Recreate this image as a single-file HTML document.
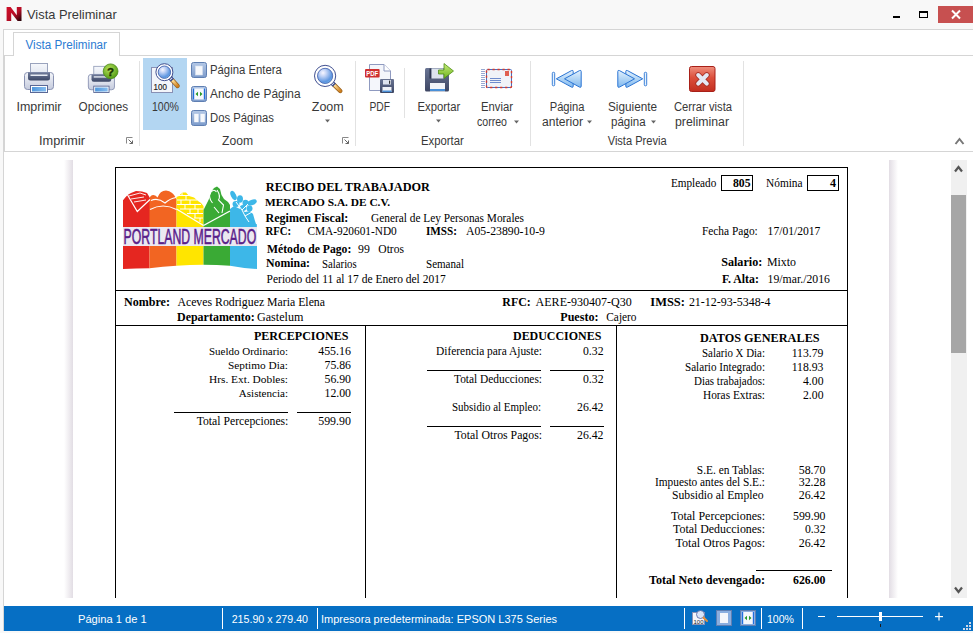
<!DOCTYPE html>
<html><head><meta charset="utf-8"><title>Vista Preliminar</title>
<style>html,body{margin:0;padding:0;width:973px;height:633px;overflow:hidden;background:#f8f8f8}</style>
</head><body>
<svg width="973" height="633" viewBox="0 0 973 633" style="display:block"><rect x="0" y="0" width="973" height="633" fill="#f8f8f8"/>
<defs><linearGradient id="nlg" x1="0" y1="0" x2="1" y2="1"><stop offset="0" stop-color="#d0102a"/><stop offset="0.55" stop-color="#b50d25"/><stop offset="1" stop-color="#1a0005"/></linearGradient></defs>
<path d="M6.6 21 L6.6 7 L10.6 7 L16.8 15.2 L16.8 7 L21.5 7 L21.5 21 L17.6 21 L11.2 12.8 L11.2 21 Z" fill="url(#nlg)"/>
<text x="27" y="18.5" font-family="Liberation Sans" font-size="12.7" fill="#383838" textLength="89.80" lengthAdjust="spacingAndGlyphs">Vista Preliminar</text>
<rect x="893" y="16" width="7" height="2" fill="#000"/>
<rect x="919.5" y="11.5" width="8" height="6" fill="none" stroke="#000" stroke-width="1"/>
<rect x="919" y="11" width="9" height="2" fill="#000"/>
<rect x="938" y="6" width="35" height="17" fill="#c75050"/>
<path d="M952 10.5 L960 18.5 M960 10.5 L952 18.5" stroke="#fff" stroke-width="2"/>
<rect x="3" y="29" width="970" height="1" fill="#d5d5d5"/>
<rect x="4" y="30" width="969" height="122" fill="#ffffff"/>
<rect x="3" y="29" width="1" height="602" fill="#d5d5d5"/>
<rect x="13" y="32" width="107" height="1" fill="#d5d5d5"/>
<rect x="13" y="32" width="1" height="24" fill="#d5d5d5"/>
<rect x="119" y="32" width="1" height="24" fill="#d5d5d5"/>
<rect x="4" y="55" width="9" height="1" fill="#d5d5d5"/>
<rect x="120" y="55" width="853" height="1" fill="#d5d5d5"/>
<text x="25.5" y="48.6" font-family="Liberation Sans" font-size="12" fill="#2b7bd3" textLength="81.50" lengthAdjust="spacingAndGlyphs">Vista Preliminar</text>
<rect x="4" y="151" width="969" height="1" fill="#d5d5d5"/>
<rect x="4" y="56" width="1" height="95" fill="#d5d5d5"/>
<rect x="139" y="61" width="1" height="85" fill="#e2e2e2"/>
<rect x="355" y="61" width="1" height="85" fill="#e2e2e2"/>
<rect x="530" y="61" width="1" height="85" fill="#e2e2e2"/>
<rect x="743" y="61" width="1" height="85" fill="#e2e2e2"/>
<rect x="404" y="68" width="1" height="50" fill="#e2e2e2"/>
<rect x="143" y="58" width="44" height="72" fill="#b3d6f2"/>
<text x="16.5" y="111" font-family="Liberation Sans" font-size="12" fill="#383838" textLength="45.00" lengthAdjust="spacingAndGlyphs">Imprimir</text>
<text x="78.6" y="111" font-family="Liberation Sans" font-size="12" fill="#383838" textLength="49.40" lengthAdjust="spacingAndGlyphs">Opciones</text>
<text x="152" y="111" font-family="Liberation Sans" font-size="12" fill="#383838" textLength="27.00" lengthAdjust="spacingAndGlyphs">100%</text>
<text x="210" y="74" font-family="Liberation Sans" font-size="12" fill="#383838" textLength="71.80" lengthAdjust="spacingAndGlyphs">Página Entera</text>
<text x="210" y="98" font-family="Liberation Sans" font-size="12" fill="#383838" textLength="90.50" lengthAdjust="spacingAndGlyphs">Ancho de Página</text>
<text x="210" y="122" font-family="Liberation Sans" font-size="12" fill="#383838" textLength="64.00" lengthAdjust="spacingAndGlyphs">Dos Páginas</text>
<text x="311.8" y="111" font-family="Liberation Sans" font-size="12" fill="#383838" textLength="31.90" lengthAdjust="spacingAndGlyphs">Zoom</text>
<text x="369.5" y="111" font-family="Liberation Sans" font-size="12" fill="#383838" textLength="20.50" lengthAdjust="spacingAndGlyphs">PDF</text>
<text x="417.5" y="111" font-family="Liberation Sans" font-size="12" fill="#383838" textLength="42.70" lengthAdjust="spacingAndGlyphs">Exportar</text>
<text x="481" y="111" font-family="Liberation Sans" font-size="12" fill="#383838" textLength="32.00" lengthAdjust="spacingAndGlyphs">Enviar</text>
<text x="477" y="126" font-family="Liberation Sans" font-size="12" fill="#383838" textLength="30.00" lengthAdjust="spacingAndGlyphs">correo</text>
<text x="549.7" y="111" font-family="Liberation Sans" font-size="12" fill="#383838" textLength="34.80" lengthAdjust="spacingAndGlyphs">Página</text>
<text x="542" y="126" font-family="Liberation Sans" font-size="12" fill="#383838" textLength="41.00" lengthAdjust="spacingAndGlyphs">anterior</text>
<text x="608" y="111" font-family="Liberation Sans" font-size="12" fill="#383838" textLength="49.00" lengthAdjust="spacingAndGlyphs">Siguiente</text>
<text x="611" y="126" font-family="Liberation Sans" font-size="12" fill="#383838" textLength="34.60" lengthAdjust="spacingAndGlyphs">página</text>
<text x="674" y="111" font-family="Liberation Sans" font-size="12" fill="#383838" textLength="58.00" lengthAdjust="spacingAndGlyphs">Cerrar vista</text>
<text x="675" y="126" font-family="Liberation Sans" font-size="12" fill="#383838" textLength="54.00" lengthAdjust="spacingAndGlyphs">preliminar</text>
<text x="39" y="145" font-family="Liberation Sans" font-size="12" fill="#383838" textLength="46.00" lengthAdjust="spacingAndGlyphs">Imprimir</text>
<text x="222" y="145" font-family="Liberation Sans" font-size="12" fill="#383838" textLength="31.00" lengthAdjust="spacingAndGlyphs">Zoom</text>
<text x="421" y="145" font-family="Liberation Sans" font-size="12" fill="#383838" textLength="42.80" lengthAdjust="spacingAndGlyphs">Exportar</text>
<text x="607.7" y="145" font-family="Liberation Sans" font-size="12" fill="#383838" textLength="58.90" lengthAdjust="spacingAndGlyphs">Vista Previa</text>
<path d="M325.0 119.5 L330.0 119.5 L327.5 122.5 Z" fill="#666"/>
<path d="M436.0 119.5 L441.0 119.5 L438.5 122.5 Z" fill="#666"/>
<path d="M514.0 120.5 L519.0 120.5 L516.5 123.5 Z" fill="#666"/>
<path d="M587.0 120.5 L592.0 120.5 L589.5 123.5 Z" fill="#666"/>
<path d="M651.0 120.5 L656.0 120.5 L653.5 123.5 Z" fill="#666"/>
<path d="M126.5 143.5 V137.5 H132.5" fill="none" stroke="#888" stroke-width="1"/>
<path d="M128.5 139.5 L132.5 143.5 M132.5 140.5 V143.5 H129.5" fill="none" stroke="#666" stroke-width="1"/>
<path d="M342.5 143.5 V137.5 H348.5" fill="none" stroke="#888" stroke-width="1"/>
<path d="M344.5 139.5 L348.5 143.5 M348.5 140.5 V143.5 H345.5" fill="none" stroke="#666" stroke-width="1"/>
<path d="M955.5 144 L959.5 139 L963.5 144" fill="none" stroke="#777" stroke-width="2"/>
<defs>
<linearGradient id="pbody" x1="0" y1="0" x2="0" y2="1"><stop offset="0" stop-color="#f4f6fa"/><stop offset="1" stop-color="#c5cbdd"/></linearGradient>
<linearGradient id="ppaper" x1="0" y1="0" x2="0" y2="1"><stop offset="0" stop-color="#f6f8fc"/><stop offset="1" stop-color="#dfe4ee"/></linearGradient>
<linearGradient id="pslot" x1="0" y1="0" x2="0" y2="1"><stop offset="0" stop-color="#6f7b9a"/><stop offset="1" stop-color="#3c4766"/></linearGradient>
<linearGradient id="ptray" x1="0" y1="0" x2="1" y2="0"><stop offset="0" stop-color="#4f97dc"/><stop offset="1" stop-color="#86bdf0"/></linearGradient>
<radialGradient id="green" cx="0.4" cy="0.35" r="0.7"><stop offset="0" stop-color="#b6e05a"/><stop offset="1" stop-color="#4f9a12"/></radialGradient>
<radialGradient id="lens" cx="0.36" cy="0.3" r="0.8"><stop offset="0" stop-color="#f8f6ff"/><stop offset="0.28" stop-color="#c4d4f6"/><stop offset="0.75" stop-color="#5c95e0"/><stop offset="1" stop-color="#7cc4ee"/></radialGradient>
<linearGradient id="handle" x1="0" y1="0" x2="1" y2="1"><stop offset="0" stop-color="#ffe3a0"/><stop offset="1" stop-color="#d0801e"/></linearGradient>
<linearGradient id="sqico" x1="0" y1="0" x2="0" y2="1"><stop offset="0" stop-color="#b4c8e6"/><stop offset="1" stop-color="#7c9bcb"/></linearGradient>
<linearGradient id="floppy" x1="0" y1="0" x2="0" y2="1"><stop offset="0" stop-color="#6a7594"/><stop offset="1" stop-color="#3d4663"/></linearGradient>
<linearGradient id="garrow" x1="0" y1="0" x2="0" y2="1"><stop offset="0" stop-color="#c6ec7a"/><stop offset="1" stop-color="#6fb41e"/></linearGradient>
<linearGradient id="navblue" x1="0" y1="0" x2="0" y2="1"><stop offset="0" stop-color="#e4f2fd"/><stop offset="1" stop-color="#7fb8ee"/></linearGradient>
<linearGradient id="redbox" x1="0" y1="0" x2="0" y2="1"><stop offset="0" stop-color="#ef8f7e"/><stop offset="0.45" stop-color="#dc4f3c"/><stop offset="1" stop-color="#c22d1f"/></linearGradient>
</defs><g transform="translate(23,62) scale(1.0)">
<rect x="7.5" y="1.5" width="17" height="12" fill="url(#ppaper)" stroke="#9aa3bd"/>
<rect x="1.5" y="10.5" width="29" height="17" rx="3" fill="url(#pbody)" stroke="#8a93b3"/>
<path d="M5 10.5 H27 V16 Q27 18.5 24.5 18.5 H7.5 Q5 18.5 5 16 Z" fill="url(#pslot)"/>
<rect x="7.5" y="12.5" width="17" height="1.5" fill="#e7ebf3"/>
<rect x="7.5" y="23.5" width="17" height="7" fill="#ffffff" stroke="#5a6896"/>
<rect x="9" y="25" width="14" height="4.5" fill="url(#ptray)"/>
</g><g transform="translate(87,65) scale(0.9)">
<rect x="7.5" y="1.5" width="17" height="12" fill="url(#ppaper)" stroke="#9aa3bd"/>
<rect x="1.5" y="10.5" width="29" height="17" rx="3" fill="url(#pbody)" stroke="#8a93b3"/>
<path d="M5 10.5 H27 V16 Q27 18.5 24.5 18.5 H7.5 Q5 18.5 5 16 Z" fill="url(#pslot)"/>
<rect x="7.5" y="12.5" width="17" height="1.5" fill="#e7ebf3"/>
<rect x="7.5" y="23.5" width="17" height="7" fill="#ffffff" stroke="#5a6896"/>
<rect x="9" y="25" width="14" height="4.5" fill="url(#ptray)"/>
</g><circle cx="110.6" cy="71.3" r="7.4" fill="url(#green)" stroke="#4a8a18" stroke-width="0.8"/>
<text x="107" y="76" font-family="Liberation Sans" font-weight="bold" font-size="11.5" fill="#1a3300" stroke="#1a3300" stroke-width="0.4">?</text><rect x="151.5" y="67.5" width="21" height="25" fill="#f3f5fa" stroke="#8890b4"/>
<text x="153.6" y="89.8" font-family="Liberation Sans" font-size="8.2" fill="#1a1a1a" stroke="#1a1a1a" stroke-width="0.15" textLength="13.3" lengthAdjust="spacingAndGlyphs">100</text>
<line x1="172.36143696235465" y1="80.31241727341363" x2="177.6" y2="86" stroke="#9a621e" stroke-width="4.4" stroke-linecap="round"/>
<line x1="172.36143696235465" y1="80.31241727341363" x2="177.6" y2="86" stroke="url(#handle)" stroke-width="2.8" stroke-linecap="round"/>
<line x1="169.9225242452482" y1="77.66445489484092" x2="172.36143696235465" y2="80.31241727341363" stroke="#34458a" stroke-width="4.4"/>
<line x1="170.80324272642554" y1="78.62066353154773" x2="171.41297090570214" y2="79.2826541261909" stroke="#e8ecf6" stroke-width="3"/>
<circle cx="164.4" cy="72.2" r="8.5" fill="#ffffff" stroke="#3f4f90" stroke-width="1"/>
<circle cx="164.4" cy="72.2" r="6.2" fill="url(#lens)" stroke="#4a66b0" stroke-width="0.9"/><rect x="191.5" y="62.5" width="15" height="15" rx="2" fill="url(#sqico)" stroke="#5f7fb2"/><rect x="195.5" y="66" width="7" height="9" fill="#f6f8fc" stroke="#d8e0ee" stroke-width="0.6"/><rect x="191.5" y="86.5" width="15" height="15" rx="2" fill="url(#sqico)" stroke="#5f7fb2"/><rect x="193" y="88.5" width="12" height="11" fill="#f6f8fc"/><rect x="193" y="88.5" width="1.2" height="11" fill="#1f6fe0"/><rect x="203.8" y="88.5" width="1.2" height="11" fill="#1f6fe0"/><path d="M195.5 94 L198 91.8 V96.2 Z M202.5 94 L200 91.8 V96.2 Z" fill="#2a9a2a"/><rect x="191.5" y="110.5" width="15" height="15" rx="2" fill="url(#sqico)" stroke="#5f7fb2"/><rect x="194.2" y="113.8" width="4.4" height="8.4" fill="#f6f8fc"/><rect x="200.4" y="113.8" width="4.4" height="8.4" fill="#f6f8fc"/><line x1="334.35030026968275" y1="85.12657847135347" x2="340.3" y2="91" stroke="#9a621e" stroke-width="4.4" stroke-linecap="round"/>
<line x1="334.35030026968275" y1="85.12657847135347" x2="340.3" y2="91" stroke="url(#handle)" stroke-width="2.8" stroke-linecap="round"/>
<line x1="331.788346050122" y1="82.5974698187102" x2="334.35030026968275" y2="85.12657847135347" stroke="#34458a" stroke-width="4.4"/>
<line x1="332.7134961849634" y1="83.51075905438692" x2="333.35398473985356" y2="84.14303621754775" stroke="#e8ecf6" stroke-width="3"/>
<circle cx="325.1" cy="75.9" r="10.6" fill="#ffffff" stroke="#3f4f90" stroke-width="1"/>
<circle cx="325.1" cy="75.9" r="7.6" fill="url(#lens)" stroke="#4a66b0" stroke-width="0.9"/><path d="M369.5 64.5 H384 L390.5 71 V90.5 H369.5 Z" fill="#f4f6fb" stroke="#8f9ac0"/>
<path d="M384 64.5 V71 H390.5" fill="#ffffff" stroke="#8f9ac0"/>
<rect x="365" y="69" width="14.6" height="8.6" rx="1" fill="#cf2f2f"/>
<text x="366.2" y="76" font-family="Liberation Sans" font-weight="bold" font-size="7" fill="#ffffff" textLength="12" lengthAdjust="spacingAndGlyphs">PDF</text>
<rect x="380" y="79" width="14" height="14" rx="1" fill="url(#floppy)"/>
<rect x="383" y="80" width="8" height="4.5" fill="#dfe4ee"/><rect x="389" y="80.6" width="1.2" height="3.2" fill="#333"/>
<rect x="382.5" y="87" width="9" height="5" fill="#f2f4f8"/><rect x="382.5" y="90.5" width="9" height="1.6" fill="#4a90d8"/><rect x="425" y="68" width="24" height="23.5" rx="1.5" fill="url(#floppy)"/>
<rect x="429.5" y="68.5" width="2" height="10" fill="#2c3450"/>
<rect x="431.5" y="68.5" width="12" height="10" fill="#dde3ee"/>
<rect x="430" y="83" width="15" height="8.5" fill="#f2f4f8"/><rect x="430" y="89" width="15" height="2" fill="#4a90d8"/>
<path d="M438.5 70 H444 V63.5 L453.5 71 L444 78.5 V74 H438.5 Z" fill="url(#garrow)" stroke="#4e8e14" stroke-width="0.8"/><rect x="486.5" y="69.5" width="25" height="18" rx="1" fill="#f0f3f8" stroke="#4a6fc0" stroke-width="1"/>
<rect x="486.5" y="69.5" width="25" height="18" rx="1" fill="none" stroke="#d83a2a" stroke-width="1.4" stroke-dasharray="2.2 2.8"/>
<rect x="505" y="71" width="4" height="5" fill="#e06050"/>
<rect x="490" y="78" width="11" height="0.9" fill="#6080c8"/><rect x="490" y="80" width="11" height="0.9" fill="#6080c8"/><rect x="490" y="82" width="11" height="0.9" fill="#6080c8"/>
<path d="M481 69.5 H485 M481 71.5 H485 M481 73.5 H485 M481 75.5 H485 M481 77.5 H485 M481 79.5 H485 M481 81.5 H485 M481 83.5 H485 M481 85.5 H485 M481 87.5 H485" stroke="#6a84c0" stroke-width="0.7"/><rect x="552.3" y="72.3" width="2.4" height="13.5" rx="1" fill="#e6f2fd" stroke="#2a74d4" stroke-width="0.9"/>
<path d="M556.3 78.8 L571.5 70.6 Q573.2 69.8 573.2 71.5 V86.2 Q573.2 87.9 571.5 87.1 Z" fill="url(#navblue)" stroke="#2a74d4" stroke-width="1" stroke-linejoin="round"/>
<path d="M564.5 78.8 L579.5 70.6 Q581.2 69.8 581.2 71.5 V86.2 Q581.2 87.9 579.5 87.1 Z" fill="url(#navblue)" stroke="#2a74d4" stroke-width="1" stroke-linejoin="round"/><rect x="644.3" y="72.3" width="2.4" height="13.5" rx="1" fill="#e6f2fd" stroke="#2a74d4" stroke-width="0.9"/>
<path d="M642.7 78.8 L627.5 70.6 Q625.8 69.8 625.8 71.5 V86.2 Q625.8 87.9 627.5 87.1 Z" fill="url(#navblue)" stroke="#2a74d4" stroke-width="1" stroke-linejoin="round"/>
<path d="M634.5 78.8 L619.5 70.6 Q617.8 69.8 617.8 71.5 V86.2 Q617.8 87.9 619.5 87.1 Z" fill="url(#navblue)" stroke="#2a74d4" stroke-width="1" stroke-linejoin="round"/><rect x="689.5" y="66.5" width="25.5" height="25" rx="2" fill="url(#redbox)" stroke="#a82018"/>
<path d="M698.2 75 L706.8 83.6 M706.8 75 L698.2 83.6" stroke="#a83228" stroke-width="5.8" stroke-linecap="round"/>
<path d="M698.2 75 L706.8 83.6 M706.8 75 L698.2 83.6" stroke="#e4e8f4" stroke-width="4" stroke-linecap="round"/>
<rect x="4" y="152" width="969" height="454" fill="#ffffff"/>
<defs><linearGradient id="shl" x1="0" x2="1"><stop offset="0" stop-color="#ffffff"/><stop offset="1" stop-color="#e2dde4"/></linearGradient><linearGradient id="shr" x1="1" x2="0"><stop offset="0" stop-color="#ffffff"/><stop offset="1" stop-color="#e2dde4"/></linearGradient></defs>
<rect x="64" y="160" width="9" height="438" fill="url(#shl)"/>
<rect x="889" y="160" width="9" height="438" fill="url(#shr)"/>
<rect x="951" y="160" width="16" height="438" fill="#f0f0f0"/>
<rect x="951" y="195" width="15" height="158" fill="#a6a6a6"/>
<path d="M955 171.5 L958.5 167 L962 171.5" fill="none" stroke="#555" stroke-width="2.2"/>
<path d="M955 587.5 L958.5 592 L962 587.5" fill="none" stroke="#555" stroke-width="2.2"/>
<g id="doc">
<rect x="115" y="167" width="733" height="1" fill="#000"/>
<rect x="115" y="167" width="1" height="431" fill="#000"/>
<rect x="847" y="167" width="1" height="431" fill="#000"/>
<rect x="115" y="290" width="733" height="1" fill="#000"/>
<rect x="115" y="325" width="733" height="1" fill="#000"/>
<rect x="365" y="325" width="1" height="273" fill="#000"/>
<rect x="616" y="325" width="1" height="273" fill="#000"/>
<rect x="721.5" y="175.5" width="31" height="15" fill="none" stroke="#000" stroke-width="1"/>
<rect x="807.5" y="175.5" width="31" height="15" fill="none" stroke="#000" stroke-width="1"/>
<rect x="174" y="412" width="114" height="1" fill="#000"/>
<rect x="297" y="412" width="54" height="1" fill="#000"/>
<rect x="427" y="370" width="114" height="1" fill="#000"/>
<rect x="550" y="370" width="54" height="1" fill="#000"/>
<rect x="427" y="426" width="114" height="1" fill="#000"/>
<rect x="550" y="426" width="54" height="1" fill="#000"/>
<rect x="756" y="570" width="76" height="1" fill="#000"/>
<text x="265.8" y="191" font-family="Liberation Serif" font-size="12.5" font-weight="bold" fill="#000" textLength="164.20" lengthAdjust="spacingAndGlyphs">RECIBO DEL TRABAJADOR</text>
<text x="265" y="206" font-family="Liberation Serif" font-size="11.4" font-weight="bold" fill="#000" textLength="125.00" lengthAdjust="spacingAndGlyphs">MERCADO S.A. DE C.V.</text>
<text x="265.5" y="221.7" font-family="Liberation Serif" font-size="12.07" font-weight="bold" fill="#000" textLength="82.80" lengthAdjust="spacingAndGlyphs">Regimen Fiscal:</text>
<text x="371" y="221.6" font-family="Liberation Serif" font-size="11.8" fill="#000" textLength="153.00" lengthAdjust="spacingAndGlyphs">General de Ley Personas Morales</text>
<text x="265.5" y="234.5" font-family="Liberation Serif" font-size="11.8" font-weight="bold" fill="#000" textLength="25.70" lengthAdjust="spacingAndGlyphs">RFC:</text>
<text x="307.4" y="234.5" font-family="Liberation Serif" font-size="11.8" fill="#000" textLength="89.40" lengthAdjust="spacingAndGlyphs">CMA-920601-ND0</text>
<text x="426" y="234.5" font-family="Liberation Serif" font-size="11.8" font-weight="bold" fill="#000" textLength="31.00" lengthAdjust="spacingAndGlyphs">IMSS:</text>
<text x="466" y="234.5" font-family="Liberation Serif" font-size="11.8" fill="#000" textLength="79.00" lengthAdjust="spacingAndGlyphs">A05-23890-10-9</text>
<text x="267" y="252.8" font-family="Liberation Serif" font-size="11.67" font-weight="bold" fill="#000" textLength="84.30" lengthAdjust="spacingAndGlyphs">Método de Pago:</text>
<text x="358" y="252.8" font-family="Liberation Serif" font-size="11.8" fill="#000" textLength="11.80" lengthAdjust="spacingAndGlyphs">99</text>
<text x="378.3" y="252.8" font-family="Liberation Serif" font-size="11.8" fill="#000" textLength="25.70" lengthAdjust="spacingAndGlyphs">Otros</text>
<text x="266" y="266.7" font-family="Liberation Serif" font-size="11.82" font-weight="bold" fill="#000" textLength="44.00" lengthAdjust="spacingAndGlyphs">Nomina:</text>
<text x="322" y="267.6" font-family="Liberation Serif" font-size="11.7" fill="#000" textLength="34.70" lengthAdjust="spacingAndGlyphs">Salarios</text>
<text x="426" y="267.6" font-family="Liberation Serif" font-size="11.7" fill="#000" textLength="38.00" lengthAdjust="spacingAndGlyphs">Semanal</text>
<text x="266.6" y="282.5" font-family="Liberation Serif" font-size="11.8" fill="#000" textLength="179.10" lengthAdjust="spacingAndGlyphs">Periodo del 11 al 17 de Enero del 2017</text>
<text x="670.9" y="186.7" font-family="Liberation Serif" font-size="11.8" fill="#000" textLength="45.40" lengthAdjust="spacingAndGlyphs">Empleado</text>
<text x="733" y="186.7" font-family="Liberation Serif" font-size="11.67" font-weight="bold" fill="#000" textLength="17.50" lengthAdjust="spacingAndGlyphs">805</text>
<text x="766" y="186.7" font-family="Liberation Serif" font-size="11.8" fill="#000" textLength="36.60" lengthAdjust="spacingAndGlyphs">Nómina</text>
<text x="830" y="186.7" font-family="Liberation Serif" font-size="12.0" font-weight="bold" fill="#000" textLength="6.00" lengthAdjust="spacingAndGlyphs">4</text>
<text x="701.9" y="235" font-family="Liberation Serif" font-size="11.8" fill="#000" textLength="55.90" lengthAdjust="spacingAndGlyphs">Fecha Pago:</text>
<text x="767.6" y="235" font-family="Liberation Serif" font-size="11.8" fill="#000" textLength="52.80" lengthAdjust="spacingAndGlyphs">17/01/2017</text>
<text x="721.2" y="265.7" font-family="Liberation Serif" font-size="12.13" font-weight="bold" fill="#000" textLength="41.10" lengthAdjust="spacingAndGlyphs">Salario:</text>
<text x="767" y="265.7" font-family="Liberation Serif" font-size="11.86" fill="#000" textLength="29.00" lengthAdjust="spacingAndGlyphs">Mixto</text>
<text x="722" y="282.5" font-family="Liberation Serif" font-size="11.76" font-weight="bold" fill="#000" textLength="36.80" lengthAdjust="spacingAndGlyphs">F. Alta:</text>
<text x="767.6" y="282.5" font-family="Liberation Serif" font-size="11.8" fill="#000" textLength="62.30" lengthAdjust="spacingAndGlyphs">19/mar./2016</text>
<text x="124" y="305.8" font-family="Liberation Serif" font-size="12.06" font-weight="bold" fill="#000" textLength="46.00" lengthAdjust="spacingAndGlyphs">Nombre:</text>
<text x="177.4" y="305.8" font-family="Liberation Serif" font-size="11.8" fill="#000" textLength="147.60" lengthAdjust="spacingAndGlyphs">Aceves Rodriguez Maria Elena</text>
<text x="502.3" y="305.6" font-family="Liberation Serif" font-size="11.8" font-weight="bold" fill="#000" textLength="28.40" lengthAdjust="spacingAndGlyphs">RFC:</text>
<text x="535.6" y="305.6" font-family="Liberation Serif" font-size="12.03" fill="#000" textLength="96.20" lengthAdjust="spacingAndGlyphs">AERE-930407-Q30</text>
<text x="650.3" y="305.6" font-family="Liberation Serif" font-size="11.8" font-weight="bold" fill="#000" textLength="34.60" lengthAdjust="spacingAndGlyphs">IMSS:</text>
<text x="688.9" y="305.6" font-family="Liberation Serif" font-size="11.96" fill="#000" textLength="81.70" lengthAdjust="spacingAndGlyphs">21-12-93-5348-4</text>
<text x="177" y="320.5" font-family="Liberation Serif" font-size="11.97" font-weight="bold" fill="#000" textLength="77.80" lengthAdjust="spacingAndGlyphs">Departamento:</text>
<text x="257" y="320.5" font-family="Liberation Serif" font-size="12.11" fill="#000" textLength="46.40" lengthAdjust="spacingAndGlyphs">Gastelum</text>
<text x="560.3" y="321" font-family="Liberation Serif" font-size="12.07" font-weight="bold" fill="#000" textLength="38.20" lengthAdjust="spacingAndGlyphs">Puesto:</text>
<text x="606.3" y="321.2" font-family="Liberation Serif" font-size="11.8" fill="#000" textLength="30.20" lengthAdjust="spacingAndGlyphs">Cajero</text>
<text x="253.9" y="340" font-family="Liberation Serif" font-size="13" font-weight="bold" fill="#000" textLength="94.50" lengthAdjust="spacingAndGlyphs">PERCEPCIONES</text>
<text x="209" y="355" font-family="Liberation Serif" font-size="11.3" fill="#000" textLength="79.00" lengthAdjust="spacingAndGlyphs">Sueldo Ordinario:</text>
<text x="318.2" y="355" font-family="Liberation Serif" font-size="11.93" fill="#000" textLength="32.80" lengthAdjust="spacingAndGlyphs">455.16</text>
<text x="228" y="369" font-family="Liberation Serif" font-size="11.3" fill="#000" textLength="60.00" lengthAdjust="spacingAndGlyphs">Septimo Dia:</text>
<text x="324.5" y="369" font-family="Liberation Serif" font-size="11.8" fill="#000" textLength="26.50" lengthAdjust="spacingAndGlyphs">75.86</text>
<text x="209" y="383" font-family="Liberation Serif" font-size="11.3" fill="#000" textLength="79.00" lengthAdjust="spacingAndGlyphs">Hrs. Ext. Dobles:</text>
<text x="324.5" y="383" font-family="Liberation Serif" font-size="11.8" fill="#000" textLength="26.50" lengthAdjust="spacingAndGlyphs">56.90</text>
<text x="238.8" y="397" font-family="Liberation Serif" font-size="11.3" fill="#000" textLength="49.20" lengthAdjust="spacingAndGlyphs">Asistencia:</text>
<text x="324.5" y="397" font-family="Liberation Serif" font-size="11.8" fill="#000" textLength="26.50" lengthAdjust="spacingAndGlyphs">12.00</text>
<text x="196.7" y="425" font-family="Liberation Serif" font-size="11.8" fill="#000" textLength="91.70" lengthAdjust="spacingAndGlyphs">Total Percepciones:</text>
<text x="318.2" y="425" font-family="Liberation Serif" font-size="11.93" fill="#000" textLength="32.80" lengthAdjust="spacingAndGlyphs">599.90</text>
<text x="513" y="340" font-family="Liberation Serif" font-size="13" font-weight="bold" fill="#000" textLength="88.30" lengthAdjust="spacingAndGlyphs">DEDUCCIONES</text>
<text x="436" y="355" font-family="Liberation Serif" font-size="11.8" fill="#000" textLength="106.00" lengthAdjust="spacingAndGlyphs">Diferencia para Ajuste:</text>
<text x="583" y="355" font-family="Liberation Serif" font-size="11.8" fill="#000" textLength="20.50" lengthAdjust="spacingAndGlyphs">0.32</text>
<text x="454" y="383" font-family="Liberation Serif" font-size="11.8" fill="#000" textLength="88.00" lengthAdjust="spacingAndGlyphs">Total Deducciones:</text>
<text x="583" y="383" font-family="Liberation Serif" font-size="11.8" fill="#000" textLength="20.50" lengthAdjust="spacingAndGlyphs">0.32</text>
<text x="452" y="410.6" font-family="Liberation Serif" font-size="11.8" fill="#000" textLength="89.00" lengthAdjust="spacingAndGlyphs">Subsidio al Empleo:</text>
<text x="577" y="410.6" font-family="Liberation Serif" font-size="11.8" fill="#000" textLength="26.50" lengthAdjust="spacingAndGlyphs">26.42</text>
<text x="454.5" y="438.7" font-family="Liberation Serif" font-size="11.8" fill="#000" textLength="87.50" lengthAdjust="spacingAndGlyphs">Total Otros Pagos:</text>
<text x="577" y="438.7" font-family="Liberation Serif" font-size="11.8" fill="#000" textLength="26.50" lengthAdjust="spacingAndGlyphs">26.42</text>
<text x="700" y="341.6" font-family="Liberation Serif" font-size="13" font-weight="bold" fill="#000" textLength="119.60" lengthAdjust="spacingAndGlyphs">DATOS GENERALES</text>
<text x="702" y="357" font-family="Liberation Serif" font-size="11.8" fill="#000" textLength="63.00" lengthAdjust="spacingAndGlyphs">Salario X Dia:</text>
<text x="791.7" y="357" font-family="Liberation Serif" font-size="11.8" fill="#000" textLength="31.80" lengthAdjust="spacingAndGlyphs">113.79</text>
<text x="685" y="370.7" font-family="Liberation Serif" font-size="11.8" fill="#000" textLength="80.00" lengthAdjust="spacingAndGlyphs">Salario Integrado:</text>
<text x="791.7" y="370.7" font-family="Liberation Serif" font-size="11.8" fill="#000" textLength="31.80" lengthAdjust="spacingAndGlyphs">118.93</text>
<text x="694" y="385.2" font-family="Liberation Serif" font-size="11.8" fill="#000" textLength="71.00" lengthAdjust="spacingAndGlyphs">Dias trabajados:</text>
<text x="803" y="385.2" font-family="Liberation Serif" font-size="11.8" fill="#000" textLength="20.50" lengthAdjust="spacingAndGlyphs">4.00</text>
<text x="703" y="399" font-family="Liberation Serif" font-size="11.8" fill="#000" textLength="62.00" lengthAdjust="spacingAndGlyphs">Horas Extras:</text>
<text x="803" y="399" font-family="Liberation Serif" font-size="11.8" fill="#000" textLength="20.50" lengthAdjust="spacingAndGlyphs">2.00</text>
<text x="696.8" y="473.8" font-family="Liberation Serif" font-size="11.8" fill="#000" textLength="68.00" lengthAdjust="spacingAndGlyphs">S.E. en Tablas:</text>
<text x="798.7" y="473.8" font-family="Liberation Serif" font-size="11.91" fill="#000" textLength="26.80" lengthAdjust="spacingAndGlyphs">58.70</text>
<text x="655" y="486" font-family="Liberation Serif" font-size="11.8" fill="#000" textLength="110.00" lengthAdjust="spacingAndGlyphs">Impuesto antes del S.E.:</text>
<text x="798.7" y="486" font-family="Liberation Serif" font-size="11.91" fill="#000" textLength="26.80" lengthAdjust="spacingAndGlyphs">32.28</text>
<text x="672" y="498.5" font-family="Liberation Serif" font-size="11.8" fill="#000" textLength="91.60" lengthAdjust="spacingAndGlyphs">Subsidio al Empleo</text>
<text x="798.7" y="498.5" font-family="Liberation Serif" font-size="11.91" fill="#000" textLength="26.80" lengthAdjust="spacingAndGlyphs">26.42</text>
<text x="671" y="519.8" font-family="Liberation Serif" font-size="11.98" fill="#000" textLength="94.00" lengthAdjust="spacingAndGlyphs">Total Percepciones:</text>
<text x="793" y="519.8" font-family="Liberation Serif" font-size="11.82" fill="#000" textLength="32.50" lengthAdjust="spacingAndGlyphs">599.90</text>
<text x="673" y="532.9" font-family="Liberation Serif" font-size="11.9" fill="#000" textLength="92.00" lengthAdjust="spacingAndGlyphs">Total Deducciones:</text>
<text x="805" y="532.9" font-family="Liberation Serif" font-size="11.8" fill="#000" textLength="20.50" lengthAdjust="spacingAndGlyphs">0.32</text>
<text x="675.5" y="547.3" font-family="Liberation Serif" font-size="12.05" fill="#000" textLength="89.50" lengthAdjust="spacingAndGlyphs">Total Otros Pagos:</text>
<text x="798.7" y="547.3" font-family="Liberation Serif" font-size="11.91" fill="#000" textLength="26.80" lengthAdjust="spacingAndGlyphs">26.42</text>
<text x="649" y="583.8" font-family="Liberation Serif" font-size="12.5" font-weight="bold" fill="#000" textLength="116.00" lengthAdjust="spacingAndGlyphs">Total Neto devengado:</text>
<text x="793" y="583.8" font-family="Liberation Serif" font-size="11.82" font-weight="bold" fill="#000" textLength="32.50" lengthAdjust="spacingAndGlyphs">626.00</text>
<g id="logo">
<path d="M123 227 V200 L127.5 195 L131 193 L136 191 L142 191.5 L147 193 L150 198 V227 Z" fill="#e52620"/>
<path d="M123 193 L127.5 193.8 L123 200 Z" fill="#ffffff"/>
<path d="M149.5 227 V199 Q150 195 153.5 195 Q156 195 157.5 197.5 Q160 190.5 166 190.5 Q173 191 176.5 199 V227 Z" fill="#f26522"/>
<path d="M176.5 227 V197 L179 196 L182 192.5 L186 192.5 L189 196 L194 197.5 L198 201 L201 203 L203.5 206 V227 Z" fill="#ffe500"/>
<path d="M203.5 227 V210 L206 205 L209 199 L211 192 L214 188 L217 186.5 L220 189 L221.5 195 L224 199 L228 202 L230 205 V227 Z" fill="#3aaa35"/>
<path d="M230 227 V209 L234 206 L240 209 L245 212 L250 211 L253 214 L255 221 L257 227 Z" fill="#3db7e8"/>
<ellipse cx="233.5" cy="195.5" rx="2.6" ry="5" transform="rotate(-25 233.5 195.5)" fill="#3db7e8"/>
<ellipse cx="240" cy="199" rx="3" ry="3.8" fill="#3db7e8"/>
<ellipse cx="236" cy="204" rx="3.5" ry="3" fill="#3db7e8"/>
<ellipse cx="245.5" cy="203" rx="3" ry="3.2" fill="#3db7e8"/>
<ellipse cx="252" cy="202.5" rx="5" ry="2.6" transform="rotate(-20 252 202.5)" fill="#3db7e8"/>
<ellipse cx="243" cy="208" rx="3.2" ry="3" fill="#3db7e8"/>
<ellipse cx="249.5" cy="208.5" rx="3" ry="3" fill="#3db7e8"/>
<circle cx="256" cy="225" r="1" fill="#3db7e8"/>
<path d="M127 194 L137.3 211.5 L150 199.5" fill="none" stroke="#ffffff" stroke-width="1.2"/>
<path d="M129 196 L140 193 L146 195 M131 199 L144 197 M134 202 L146 200" fill="none" stroke="#ffffff" stroke-width="0.9"/>
<path d="M150 209.5 Q163 202.5 176.5 209.5 M151 200.5 Q158 197.5 165 203 Q170 198.5 176 197.5" fill="none" stroke="#ffffff" stroke-width="1.2"/>
<path d="M176.5 209 L203.5 225.5" fill="none" stroke="#ffffff" stroke-width="1.4"/>
<path d="M178 195.5 H190 M177 200 H197 M177 204.5 H201 M180 209 H203 M187 213.5 H203 M194 218 H203 M182 192 V196 M186 196 V200 M181 200 V204 M190 200 V204 M185 204.5 V209 M195 204.5 V209 M190 209 V213 M198 209 V213 M195 213.5 V218 M200 218 V222" fill="none" stroke="#ffffff" stroke-width="1"/>
<path d="M203.5 225.5 L230 211" fill="none" stroke="#ffffff" stroke-width="1.4"/>
<path d="M212.5 203 Q207.5 197 211 192 Q214 188.5 216.5 192 M217 190 Q221 196 218.5 200 L223.5 205 L222 213 M214 207 L219 213" fill="none" stroke="#ffffff" stroke-width="1.1"/>
<path d="M236 202 L242 210 L245 216 L249 222 M242 210 L248 204 M245 216 L252 212" fill="none" stroke="#ffffff" stroke-width="1"/>
<rect x="123" y="227" width="134" height="19" fill="#ece8f1"/>
<text x="123.6" y="244.2" font-family="Liberation Sans" font-size="21.2" fill="#5a1f8a" stroke="#5a1f8a" stroke-width="0.55" textLength="132.6" lengthAdjust="spacingAndGlyphs">PORTLAND MERCADO</text>
<path d="M123 246 H149.5 V268.2 Q136 268.5 123 269 Z" fill="#e52620"/>
<path d="M149.5 246 H176.5 V265.8 Q163 266.8 149.5 268.2 Z" fill="#f26522"/>
<path d="M176.5 246 H203.5 V264.8 Q190 265 176.5 265.8 Z" fill="#ffe500"/>
<path d="M203.5 246 H230 V265.8 Q217 265 203.5 264.8 Z" fill="#3aaa35"/>
<path d="M230 246 H257 V269 Q244 268.5 230 265.8 Z" fill="#3db7e8"/>
</g>
</g>
<rect x="4" y="606" width="969" height="25" fill="#066fc4"/>
<text x="78" y="622.6" font-family="Liberation Sans" font-size="11.2" fill="#ffffff" textLength="68.70" lengthAdjust="spacingAndGlyphs">Página 1 de 1</text>
<text x="231.7" y="622.6" font-family="Liberation Sans" font-size="11.2" fill="#ffffff" textLength="76.30" lengthAdjust="spacingAndGlyphs">215.90 x 279.40</text>
<text x="321" y="622.6" font-family="Liberation Sans" font-size="11.2" fill="#ffffff" textLength="236.00" lengthAdjust="spacingAndGlyphs">Impresora predeterminada: EPSON L375 Series</text>
<text x="767" y="622.6" font-family="Liberation Sans" font-size="11.2" fill="#ffffff" textLength="27.00" lengthAdjust="spacingAndGlyphs">100%</text>
<rect x="222" y="608" width="1" height="21" fill="#ffffff"/>
<rect x="317" y="608" width="1" height="21" fill="#ffffff"/>
<rect x="684" y="608" width="1" height="21" fill="#ffffff"/>
<rect x="761" y="608" width="1" height="21" fill="#ffffff"/>
<rect x="802" y="608" width="1" height="21" fill="#ffffff"/>
<rect x="818" y="616" width="7" height="1" fill="#fff"/>
<rect x="837" y="616" width="86" height="1" fill="#fff"/>
<rect x="879" y="612" width="3" height="9" fill="#fff"/>
<rect x="880" y="624" width="1" height="3" fill="#1a1a1a"/>
<rect x="935" y="616" width="8" height="1.2" fill="#fff"/>
<rect x="938.4" y="612.5" width="1.2" height="8" fill="#fff"/>
<rect x="692.5" y="612.5" width="12" height="12" fill="#f3f5fa" stroke="#8890b4"/>
<text x="693.5" y="623.5" font-family="Liberation Sans" font-size="6" fill="#1a1a1a" textLength="10" lengthAdjust="spacingAndGlyphs">100</text>
<circle cx="700.5" cy="614.5" r="4" fill="#d8e4f8" stroke="#4a5ea0" stroke-width="0.8"/>
<line x1="703.5" y1="617.5" x2="707" y2="621" stroke="#e09040" stroke-width="2" stroke-linecap="round"/>
<rect x="716.5" y="610.5" width="15" height="15" fill="#8aaee0" stroke="#5f7fb2"/>
<rect x="720" y="613" width="8" height="10" fill="#f4f6fb"/>
<rect x="740.5" y="610.5" width="15" height="15" fill="#8aaee0" stroke="#5f7fb2"/>
<rect x="742" y="612" width="12" height="12" fill="#f4f6fb"/><rect x="742" y="612" width="1.2" height="12" fill="#1f6fe0"/><rect x="752.8" y="612" width="1.2" height="12" fill="#1f6fe0"/>
<path d="M744.5 618 L747 615.8 V620.2 Z M751.5 618 L749 615.8 V620.2 Z" fill="#2a9a2a"/>
<rect x="969" y="622" width="2" height="2" fill="#cfd8e8"/>
<rect x="966" y="625" width="2" height="2" fill="#cfd8e8"/>
<rect x="969" y="625" width="2" height="2" fill="#cfd8e8"/>
<rect x="963" y="628" width="2" height="2" fill="#cfd8e8"/>
<rect x="966" y="628" width="2" height="2" fill="#cfd8e8"/>
<rect x="969" y="628" width="2" height="2" fill="#cfd8e8"/></svg>
</body></html>
